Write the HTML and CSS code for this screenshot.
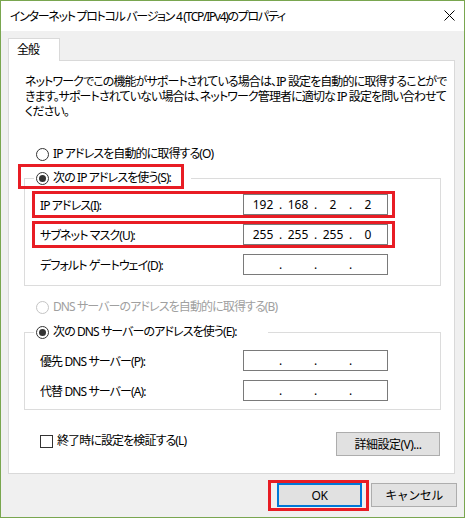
FILE: index.html
```html
<!DOCTYPE html>
<html lang="ja">
<head>
    <meta charset="UTF-8">
    <meta name="viewport" content="width=device-width, initial-scale=1.0">
    <title>インターネット プロトコル バージョン 4 (TCP/IPv4)のプロパティ</title>
    <link rel="stylesheet" href="styles.css">
</head>
<body>

    <div class="window">
        <div class="titlebar">
            <span class="title">インターネット プロトコル バージョン 4 (TCP/IPv4)のプロパティ</span>
            <svg class="close" width="11" height="11" viewBox="0 0 11 11">
                <path d="M0.5 0.5 L10.5 10.5 M10.5 0.5 L0.5 10.5" stroke="#000" stroke-width="1" fill="none"/>
            </svg>
        </div>

        <div class="main">
            <div class="tab">全般</div>
            <div class="panel">
                <p class="intro">ネットワークでこの機能がサポートされている場合は、IP 設定を自動的に取得することがで<br>きます。サポートされていない場合は、ネットワーク管理者に適切な IP 設定を問い合わせて<br>ください。</p>

                <label class="option option-first"><span class="radio"></span>IP アドレスを自動的に取得する(O)</label>

                <fieldset class="group group-ip">
                    <legend><span class="option mark-radio"><span class="radio on"></span>次の IP アドレスを使う(S):</span></legend>
                    <div class="field marked">
                        <span>IP アドレス(I):</span>
                        <div class="ipbox"><span>192</span><i>.</i><span>168</span><i>.</i><span>2</span><i>.</i><span>2</span></div>
                    </div>
                    <div class="field marked">
                        <span>サブネット マスク(U):</span>
                        <div class="ipbox"><span>255</span><i>.</i><span>255</span><i>.</i><span>255</span><i>.</i><span>0</span></div>
                    </div>
                    <div class="field">
                        <span>デフォルト ゲートウェイ(D):</span>
                        <div class="ipbox"><span></span><i>.</i><span></span><i>.</i><span></span><i>.</i><span></span></div>
                    </div>
                </fieldset>

                <label class="option option-dns disabled"><span class="radio"></span>DNS サーバーのアドレスを自動的に取得する(B)</label>

                <fieldset class="group group-dns">
                    <legend><span class="option"><span class="radio on"></span>次の DNS サーバーのアドレスを使う(E):</span></legend>
                    <div class="field">
                        <span>優先 DNS サーバー(P):</span>
                        <div class="ipbox"><span></span><i>.</i><span></span><i>.</i><span></span><i>.</i><span></span></div>
                    </div>
                    <div class="field">
                        <span>代替 DNS サーバー(A):</span>
                        <div class="ipbox"><span></span><i>.</i><span></span><i>.</i><span></span><i>.</i><span></span></div>
                    </div>
                </fieldset>

                <div class="bottom-row">
                    <label class="check"><span class="checkbox"></span>終了時に設定を検証する(L)</label>
                    <button class="btn btn-advanced">詳細設定(V)...</button>
                </div>
            </div>

            <div class="actions">
                <button class="btn btn-ok">OK</button>
                <button class="btn btn-cancel">キャンセル</button>
            </div>
        </div>
    </div>

</body>
</html>
```

FILE: styles.css
```css
body {
    margin: 0;
    padding: 0;
    font-family: "Noto Sans", "Noto Sans CJK JP", sans-serif;
    font-size: 12px;
    color: #000;
    background: #fff;
}

.window {
    width: 465px;
    height: 518px;
    box-sizing: border-box;
    border: 1px solid #79a64f;
    background: #f0f0f0;
    font-feature-settings: "palt";
    letter-spacing: -0.9px;
}

.titlebar {
    height: 30px;
    background: #fff;
    display: flex;
    align-items: center;
    justify-content: space-between;
    padding: 0 9px 0 9px;
}

.title {
    line-height: 16px;
    padding-top: 1px;
    letter-spacing: -1.3px;
}

.close {
    display: block;
    margin-top: -2px;
}

.main {
    padding: 7px 9px 0 7px;
}

.tab {
    position: relative;
    z-index: 1;
    width: 52px;
    height: 23px;
    box-sizing: border-box;
    padding: 3px 0 0 8px;
    line-height: 16px;
    background: #fff;
    border: 1px solid #d9d9d9;
    border-bottom: none;
    margin-bottom: -1px;
}

.panel {
    height: 414px;
    box-sizing: border-box;
    background: #fff;
    border: 1px solid #d9d9d9;
}

.intro {
    margin: 13px 14px 0 16px;
    line-height: 15px;
    white-space: nowrap;
}

.option {
    display: flex;
    align-items: center;
    line-height: 16px;
    height: 16px;
}

.option-first {
    margin: 27px 0 0 27px;
}

.option-dns {
    margin: 13px 0 0 27px;
}

.disabled {
    color: #a0a0a0;
}

.radio {
    width: 13px;
    height: 13px;
    box-sizing: border-box;
    border: 1px solid #333;
    border-radius: 50%;
    background: #fff;
    margin-right: 4px;
    display: flex;
    align-items: center;
    justify-content: center;
}

.radio.on::after {
    content: "";
    width: 7px;
    height: 7px;
    border-radius: 50%;
    background: #333;
}

.disabled .radio {
    border-color: #c4c4c4;
}

.group {
    border: 1px solid #dcdcdc;
    margin: 0 13px 0 15px;
    padding: 0;
    min-inline-size: 0;
}

.group legend {
    margin-left: 9px;
    padding: 0 20px 0 2px;
    height: 18px;
    display: flex;
    align-items: center;
}

.group-ip {
    margin-top: 7px;
    padding: 7px 0 10px;
}

.group-dns {
    margin-top: 8px;
    padding: 9px 0 8px;
}

.group-dns legend {
    padding-right: 31px;
}

.field {
    display: flex;
    align-items: center;
    justify-content: space-between;
    height: 21px;
    margin: 0 0 9px 10px;
    width: 357px;
    padding: 0 4px 0 5px;
    box-sizing: border-box;
}

.field:last-child {
    margin-bottom: 0;
}

.marked {
    outline: 3px solid #e81c24;
}

.mark-radio {
    position: relative;
}

.mark-radio::after {
    content: "";
    position: absolute;
    top: -6px;
    bottom: -3px;
    left: -18px;
    right: -13px;
    border: 3px solid #e81c24;
}

.ipbox {
    width: 145px;
    height: 21px;
    box-sizing: border-box;
    border: 1px solid #7a7a7a;
    background: #fff;
    display: flex;
    align-items: center;
    padding-left: 5px;
    letter-spacing: 0;
}

.ipbox span {
    width: 28px;
    text-align: center;
}

.ipbox i {
    font-style: normal;
    width: 7px;
    text-align: center;
}

.bottom-row {
    display: flex;
    justify-content: space-between;
    align-items: flex-start;
    margin: 22px 14px 0 31px;
}

.check {
    display: flex;
    align-items: center;
    line-height: 16px;
    margin-top: 1px;
}

.checkbox {
    width: 13px;
    height: 13px;
    box-sizing: border-box;
    border: 1px solid #333;
    background: #fff;
    margin-right: 4px;
}

.btn {
    font-family: inherit;
    font-size: 12px;
    letter-spacing: -0.5px;
    background: #e1e1e1;
    border: 1px solid #adadad;
    color: #000;
    height: 24px;
    padding: 0;
    box-sizing: border-box;
}

.btn-advanced {
    width: 104px;
}

.actions {
    display: flex;
    justify-content: flex-end;
    gap: 9px;
    margin-top: 9px;
    margin-right: -2px;
}

.btn-ok {
    width: 85px;
    border: 2px solid #0078d7;
    position: relative;
}

.btn-ok::after {
    content: "";
    position: absolute;
    top: -5px;
    bottom: -6px;
    left: -11px;
    right: -9px;
    border: 3px solid #e81c24;
}

.btn-cancel {
    width: 86px;
}
```
